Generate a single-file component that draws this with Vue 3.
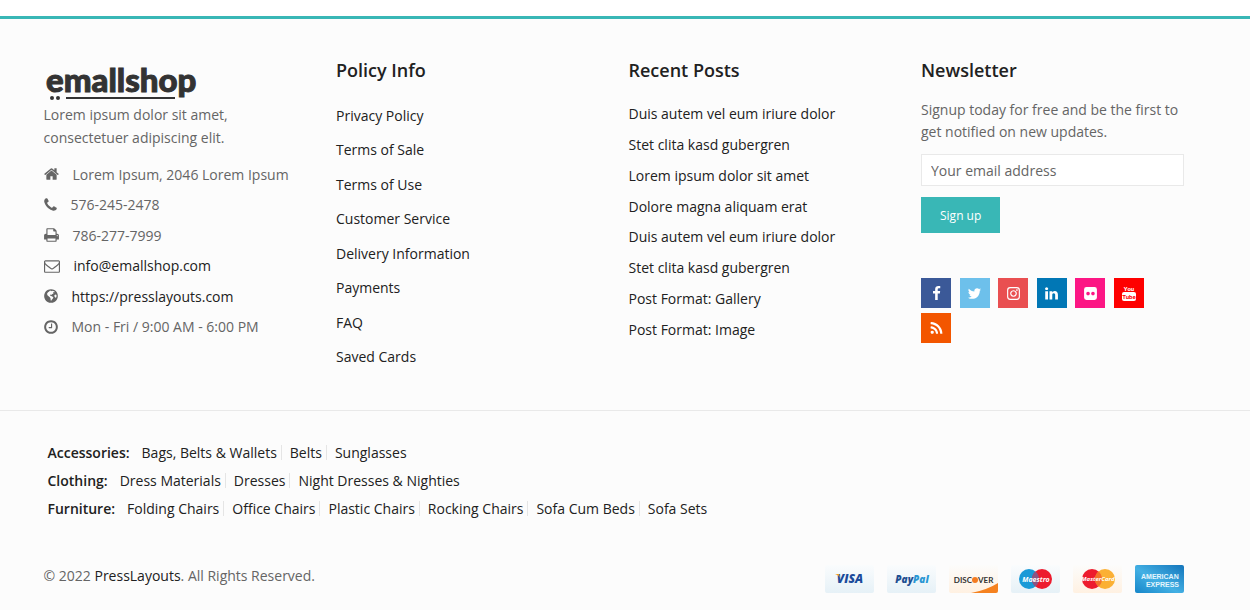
<script setup>
import { ref } from 'vue'

const email = ref('')

const contacts = [
  { text: 'Lorem Ipsum, 2046 Lorem Ipsum', w: 15, box: '64 0 1664 1792', d: 'M1472 992v480q0 26-19 45t-45 19h-384v-384h-256v384h-384q-26 0-45-19t-19-45v-480q0-1 .5-3t.5-3l575-474 575 474q1 2 1 6zm223-69l-62 74q-8 9-21 11h-3q-13 0-21-7l-692-577-692 577q-12 8-24 7-13-2-21-11l-62-74q-8-10-7-23.5t11-21.5l719-599q32-26 76-26t76 26l244 204v-195q0-14 9-23t23-9h192q14 0 23 9t9 23v408l219 182q10 8 11 21.5t-7 23.5z' },
  { text: '576-245-2478', w: 13, box: '192 0 1408 1792', d: 'M1600 1240q0 27-10 70.5t-21 68.5q-21 50-122 106-94 51-186 51-27 0-52.5-3.5t-57.5-12.5-47.5-14.5-55.5-20.5-49-18q-98-35-175-83-128-79-264.5-215.5t-215.5-264.5q-48-77-83-175-3-9-18-49t-20.5-55.5-14.5-47.5-12.5-57.5-3.5-52.5q0-92 51-186 56-101 106-122 25-11 68.5-21t70.5-10q14 0 21 3 18 6 53 76 11 19 30 54t35 63.5 31 53.5q3 4 17.5 25t21.5 35.5 7 28.5q0 20-28.5 50t-62 55-62 53-28.5 46q0 9 5 22.5t8.5 20.5 14 24 11.5 19q76 137 174 235t235 174q2 1 19 11.5t24 14 20.5 8.5 22.5 5q18 0 46-28.5t53-62 55-62 50-28.5q14 0 28.5 7t35.5 21.5 25 17.5q25 15 53.5 31t63.5 35 54 30q70 35 76 53 3 7 3 21z' },
  { text: '786-277-7999', w: 15, box: '64 0 1664 1792', d: 'M448 1536h896v-256h-896v256zm0-640h896v-384h-160q-40 0-68-28t-28-68v-160h-640v640zm1152 64q0-26-19-45t-45-19-45 19-19 45 19 45 45 19 45-19 19-45zm128 0v416q0 13-9.5 22.5t-22.5 9.5h-224v160q0 40-28 68t-68 28h-960q-40 0-68-28t-28-68v-160h-224q-13 0-22.5-9.5t-9.5-22.5v-416q0-79 56.5-135.5t135.5-56.5h64v-544q0-40 28-68t68-28h672q40 0 88 20t76 48l152 152q28 28 48 76t20 88v256h64q79 0 135.5 56.5t56.5 135.5z' },
  { text: 'info@emallshop.com', href: 'mailto:info@emallshop.com', w: 16, box: '0 0 1792 1792', d: 'M1664 1504v-768q-32 36-69 66-268 206-426 338-51 43-83 67t-86.5 48.5-102.5 24.5h-2q-48 0-102.5-24.5t-86.5-48.5-83-67q-158-132-426-338-37-30-69-66v768q0 13 9.5 22.5t22.5 9.5h1472q13 0 22.5-9.5t9.5-22.5zm0-1051v-24.5l-.5-13-3-12.5-5.5-9-9-7.5-14-2.5h-1472q-13 0-22.5 9.5t-9.5 22.5q0 168 147 284 193 152 401 317 6 5 35 29.5t46 37.5 44.5 31.5 50.5 27.5 43 9h2q20 0 43-9t50.5-27.5 44.5-31.5 46-37.5 35-29.5q208-165 401-317 54-43 100.5-115.5t46.5-131.5zm128-37v1088q0 66-47 113t-113 47h-1472q-66 0-113-47t-47-113v-1088q0-66 47-113t113-47h1472q66 0 113 47t47 113z' },
  { text: 'https://presslayouts.com', href: 'https://presslayouts.com', w: 14, box: '128 0 1536 1792', d: 'M896 128a768 768 0 1 0 .1 0zM1010 300L1240 350 1330 440 1260 470 1180 440 1120 500 1200 560 1120 640 1010 700 960 790 900 740 800 760 790 850 890 900 990 920 1120 1000 1160 1080 1060 1220 960 1330 930 1440 880 1430 850 1280 830 1130 730 1010 630 930 500 800 450 640 560 480 700 400 720 330 860 290 900 360zM1330 760L1460 720 1520 850 1500 1010 1420 1120 1350 1010 1280 940 1270 830z' },
  { text: 'Mon - Fri / 9:00 AM - 6:00 PM', w: 14, box: '128 0 1536 1792', d: 'M1024 544v448q0 14-9 23t-23 9h-320q-14 0-23-9t-9-23v-64q0-14 9-23t23-9h224v-352q0-14 9-23t23-9h64q14 0 23 9t9 23zm416 352q0-148-73-273t-198-198-273-73-273 73-198 198-73 273 73 273 198 198 273 73 273-73 198-198 73-273zm224 0q0 209-103 385.5t-279.5 279.5-385.5 103-385.5-103-279.5-279.5-103-385.5 103-385.5 279.5-279.5 385.5-103 385.5 103 279.5 279.5 103 385.5z' },
]

const policies = ['Privacy Policy', 'Terms of Sale', 'Terms of Use', 'Customer Service', 'Delivery Information', 'Payments', 'FAQ', 'Saved Cards']

const posts = [
  'Duis autem vel eum iriure dolor',
  'Stet clita kasd gubergren',
  'Lorem ipsum dolor sit amet',
  'Dolore magna aliquam erat',
  'Duis autem vel eum iriure dolor',
  'Stet clita kasd gubergren',
  'Post Format: Gallery',
  'Post Format: Image',
]

const socials = [
  { name: 'facebook', label: 'Facebook', d: 'M1343 12v264h-157q-86 0-116 36t-30 108v189h293l-39 296h-254v759h-306v-759h-255v-296h255v-218q0-186 104-288.5t277-102.5q147 0 228 12z' },
  { name: 'twitter', label: 'Twitter', d: 'M1684 408q-67 98-162 167 1 14 1 42 0 130-38 259.5t-115.5 248.5-184.5 210.5-258 146-323 54.5q-271 0-496-145 35 4 78 4 225 0 401-138-105-2-188-64.5t-114-159.5q33 5 61 5 43 0 85-11-112-23-185.5-111.5t-73.5-205.5v-4q68 38 146 41-66-44-105-115t-39-154q0-88 44-163 121 149 294.5 238.5t371.5 99.5q-8-38-8-74 0-134 94.5-228.5t228.5-94.5q140 0 236 102 109-21 205-78-37 115-142 178 93-10 186-50z' },
  { name: 'instagram', label: 'Instagram', d: 'M500 128h792q372 0 372 372v792q0 372-372 372h-792q-372 0-372-372v-792q0-372 372-372zm20 138q-254 0-254 254v752q0 254 254 254h752q254 0 254-254v-752q0-254-254-254zM896 502a394 394 0 1 1-.1 0zm0 138a256 256 0 1 0 .1 0zM1306 394a92 92 0 1 1-.1 0z' },
  { name: 'linkedin', label: 'LinkedIn', d: 'M477 625v991h-330v-991h330zm21-306q1 73-50.5 122t-135.5 49h-2q-82 0-132-49t-50-122q0-74 51.5-122.5t134.5-48.5 133 48.5 51 122.5zm1166 729v568h-329v-530q0-105-40.5-164.5t-126.5-59.5q-63 0-105.5 34.5t-63.5 85.5q-11 30-11 81v553h-329q2-399 2-647t-1-296l-1-48h329v144h-2q20-32 41-56t56.5-52 87-43.5 114.5-15.5q171 0 275 113.5t104 332.5z' },
  { name: 'flickr', label: 'Flickr', d: 'M416 128h960q288 0 288 288v960q0 288-288 288h-960q-288 0-288-288v-960q0-288 288-288zM603 685a211 211 0 1 0 .1 0zM1189 685a211 211 0 1 0 .1 0z' },
  { name: 'youtube', label: 'YouTube' },
  { name: 'rss', label: 'RSS', d: 'M576 1344q0 80-56 136t-136 56-136-56-56-136 56-136 136-56 136 56 56 136zm512 123q2 28-17 48-18 21-47 21h-135q-25 0-43-16.5t-20-41.5q-22-229-184.5-391.5t-391.5-184.5q-25-2-41.5-20t-16.5-43v-135q0-29 21-47 17-17 43-17h5q160 13 306 80.5t259 181.5q114 113 181.5 259t80.5 306zm512 2q2 27-18 47-18 20-46 20h-143q-26 0-44.5-17.5t-19.5-42.5q-12-215-101-408.5t-231.5-336-336-231.5-408.5-102q-25-1-42.5-19.5t-17.5-43.5v-143q0-28 20-46 18-18 44-18h3q262 13 501.5 120t425.5 294q187 186 294 425.5t120 501.5z' },
]

const categories = [
  { name: 'Accessories:', items: ['Bags, Belts & Wallets', 'Belts', 'Sunglasses'] },
  { name: 'Clothing:', items: ['Dress Materials', 'Dresses', 'Night Dresses & Nighties'] },
  { name: 'Furniture:', items: ['Folding Chairs', 'Office Chairs', 'Plastic Chairs', 'Rocking Chairs', 'Sofa Cum Beds', 'Sofa Sets'] },
]
</script>

<template>
  <div class="page">
    <footer class="footer">
      <div class="upper">
        <div class="container columns">
          <section class="column">
            <svg class="logo" width="160" height="45" viewBox="0 0 160 45" role="img" aria-label="emallshop">
              <text x="2" y="34" class="wordmark">emallshop</text>
              <circle cx="8" cy="40" r="2" />
              <circle cx="14" cy="40" r="2" />
              <rect x="22" y="39" width="109" height="2" />
            </svg>
            <p class="about">Lorem ipsum dolor sit amet, consectetuer adipiscing elit.</p>
            <ul class="contacts">
              <li v-for="c in contacts" :key="c.text">
                <svg class="contact-icon" :width="c.w" height="16" :viewBox="c.box" aria-hidden="true">
                  <path :d="c.d" fill-rule="evenodd" />
                </svg>
                <a v-if="c.href" :href="c.href">{{ c.text }}</a>
                <span v-else>{{ c.text }}</span>
              </li>
            </ul>
          </section>

          <section class="column">
            <h2>Policy Info</h2>
            <ul class="links policy">
              <li v-for="p in policies" :key="p"><a href="#">{{ p }}</a></li>
            </ul>
          </section>

          <section class="column">
            <h2>Recent Posts</h2>
            <ul class="links posts">
              <li v-for="(p, i) in posts" :key="i"><a href="#">{{ p }}</a></li>
            </ul>
          </section>

          <section class="column">
            <h2>Newsletter</h2>
            <form class="newsletter" @submit.prevent>
              <label for="email">Signup today for free and be the first to get notified on new updates.</label>
              <input id="email" v-model="email" type="email" placeholder="Your email address" />
              <button type="submit">Sign up</button>
            </form>
            <div class="socials">
              <a v-for="s in socials" :key="s.name" href="#" :class="s.name" :aria-label="s.label">
                <svg v-if="s.d" width="15" height="15" viewBox="0 0 1792 1792" aria-hidden="true">
                  <path :d="s.d" fill-rule="evenodd" />
                </svg>
                <svg v-else width="16" height="16" viewBox="0 0 16 16" aria-hidden="true">
                  <text x="8" y="6" class="tube-text">You</text>
                  <rect x="1" y="7" width="14" height="9" rx="2" />
                  <text x="8" y="14" class="tube-text tube-red">Tube</text>
                </svg>
              </a>
            </div>
          </section>
        </div>
      </div>

      <div class="lower">
        <div class="container inset">
          <div class="categories">
            <div v-for="c in categories" :key="c.name" class="category">
              <strong>{{ c.name }}</strong>
              <a v-for="i in c.items" :key="i" href="#">{{ i }}</a>
            </div>
          </div>
          <div class="bottom">
            <p>© 2022 <a href="#">PressLayouts</a>. All Rights Reserved.</p>
            <div class="cards">
              <svg class="card" width="49" height="28" viewBox="0 0 49 28" role="img" aria-label="Visa">
                <defs>
                  <linearGradient id="pale" x1="0" y1="0" x2="0" y2="1"><stop offset="0" stop-color="#fafcfd" /><stop offset="1" stop-color="#e6f1f7" /></linearGradient>
                  <linearGradient id="cream" x1="0" y1="0" x2="0" y2="1"><stop offset="0" stop-color="#fcfcfb" /><stop offset="1" stop-color="#fff1e2" /></linearGradient>
                  <linearGradient id="blue" x1="0" y1="1" x2="1" y2="0"><stop offset="0" stop-color="#1686c9" /><stop offset=".45" stop-color="#43b0e4" /><stop offset="1" stop-color="#1475bb" /></linearGradient>
                </defs>
                <rect width="49" height="28" rx="2" fill="url(#pale)" />
                <text x="25" y="18" class="visa">VISA</text>
                <path d="M10 9h4l1 4q-1-3-5-4z" fill="#f6a01a" />
              </svg>
              <svg class="card" width="49" height="28" viewBox="0 0 49 28" role="img" aria-label="PayPal">
                <rect width="49" height="28" rx="2" fill="url(#pale)" />
                <text x="25" y="18" class="paypal">Pay<tspan fill="#2997d4">Pal</tspan></text>
              </svg>
              <svg class="card" width="49" height="28" viewBox="0 0 49 28" role="img" aria-label="Discover">
                <rect width="49" height="28" rx="2" fill="url(#cream)" />
                <path d="M22 28Q38 25 49 18v8q0 2-2 2z" fill="#f58220" />
                <text x="23" y="18" class="discover end">DISC</text>
                <circle cx="26" cy="15" r="3" fill="#f47b20" />
                <text x="29" y="18" class="discover">VER</text>
              </svg>
              <svg class="card" width="49" height="28" viewBox="0 0 49 28" role="img" aria-label="Maestro">
                <rect width="49" height="28" rx="2" fill="url(#pale)" />
                <circle cx="18" cy="14" r="10" fill="#1a9ad7" />
                <circle cx="31" cy="14" r="10" fill="#ed1b2e" />
                <path d="M24.500 6.400a10 10 0 0 1 0 15.200 10 10 0 0 1 0-15.200z" fill="#8b5584" />
                <text x="25" y="17" class="circles">Maestro</text>
              </svg>
              <svg class="card" width="49" height="28" viewBox="0 0 49 28" role="img" aria-label="MasterCard">
                <rect width="49" height="28" rx="2" fill="url(#cream)" />
                <circle cx="19" cy="14" r="10" fill="#ed1b2e" />
                <circle cx="32" cy="14" r="10" fill="#fbb034" />
                <path d="M25.500 6.400a10 10 0 0 1 0 15.200 10 10 0 0 1 0-15.200z" fill="#f3722b" />
                <text x="25" y="16" class="circles small">MasterCard</text>
              </svg>
              <svg class="card" width="49" height="28" viewBox="0 0 49 28" role="img" aria-label="American Express">
                <rect width="49" height="28" rx="2" fill="url(#blue)" />
                <text x="6" y="14" class="amex">AMERICAN</text>
                <text x="44" y="22" class="amex end">EXPRESS</text>
              </svg>
            </div>
          </div>
        </div>
      </div>
    </footer>
  </div>
</template>

<style>
body {
  margin: 0;
  background: #fff;
}
</style>

<style scoped>
.page {
  box-sizing: border-box;
  min-height: 100vh;
  padding-top: 16px;
  display: flex;
  flex-direction: column;
  font-family: "Open Sans", "Noto Sans", sans-serif;
  font-size: 14px;
  color: #656565;
}
.footer {
  flex: 1;
  border-top: 3px solid #39b7b6;
  background: #fcfcfc;
}
a {
  color: #212121;
  text-decoration: none;
}
ul {
  list-style: none;
  margin: 0;
  padding: 0;
}
p {
  margin: 0;
}
.upper {
  padding: 39px 23px 36px 0;
  border-bottom: 1px solid #e9e9e9;
}
.container {
  max-width: 1170px;
  margin: 0 auto;
}
.columns {
  display: grid;
  grid-template-columns: repeat(4, 1fr);
}
.column {
  padding: 0 15px;
}
h2 {
  margin: 0 0 16px;
  font-size: 18px;
  line-height: 24px;
  font-weight: 600;
  color: #212121;
}
.logo {
  display: block;
  fill: #333;
}
.wordmark {
  font: 900 33px Lato, "Open Sans", sans-serif;
  stroke: #333;
  stroke-width: 1;
}
.about {
  max-width: 220px;
  line-height: 23px;
}
.contacts {
  margin-top: 10px;
  min-height: 183px;
  display: grid;
  grid-auto-rows: 1fr;
}
.contacts li {
  display: flex;
  align-items: center;
  white-space: nowrap;
}
.contact-icon {
  margin-right: 14px;
  flex: none;
  fill: #656565;
}
.links {
  display: grid;
  grid-auto-rows: 1fr;
  align-items: center;
}
.policy {
  min-height: 276px;
}
.posts {
  min-height: 247px;
}
.newsletter {
  padding-top: 1px;
  display: flex;
  flex-direction: column;
  align-items: flex-start;
}
.newsletter label {
  line-height: 22px;
}
.newsletter input {
  box-sizing: border-box;
  width: 100%;
  height: 32px;
  margin: 11px 0;
  padding: 0 9px;
  border: 1px solid #e9e9e9;
  border-radius: 0;
  background: #fff;
  font: inherit;
  color: #656565;
}
.newsletter input::placeholder {
  color: #656565;
  opacity: 1;
}
.newsletter button {
  height: 36px;
  padding: 0 19px;
  border: 0;
  background: #39b7b6;
  color: #fff;
  font: 12px "Open Sans", sans-serif;
}
.socials {
  max-width: 223px;
  margin-top: 45px;
  display: grid;
  grid-template-columns: repeat(6, 30px);
  justify-content: space-between;
  row-gap: 5px;
}
.socials a {
  height: 30px;
  display: flex;
  align-items: center;
  justify-content: center;
}
.socials svg {
  fill: #fff;
}
.facebook { background: #3b5998; }
.twitter { background: #6dc0eb; }
.instagram { background: #e94f51; }
.linkedin { background: #0177b5; }
.flickr { background: #fc1684; }
.youtube { background: #fe0000; }
.rss { background: #f35600; }
.tube-text {
  font: bold 6px Roboto, sans-serif;
  text-anchor: middle;
}
.tube-red {
  fill: #fe0000;
}
.lower {
  padding: 27px 23px 17px 0;
}
.inset {
  box-sizing: border-box;
  padding: 0 15px;
}
.categories {
  padding-left: 4px;
}
.category {
  min-height: 28px;
  display: flex;
  flex-wrap: wrap;
  align-items: center;
}
.category strong {
  margin-right: 12px;
  font-weight: 600;
  color: #212121;
}
.category a {
  margin-right: 8px;
  padding-right: 4px;
  border-right: 1px solid #e5e5e5;
  line-height: 15px;
}
.category a:last-child {
  border-right: 0;
}
.bottom {
  margin-top: 43px;
  display: flex;
  justify-content: space-between;
  align-items: flex-start;
}
.bottom p {
  line-height: 22px;
}
.cards {
  display: flex;
  gap: 13px;
}
.card {
  display: block;
}
.visa {
  font: italic 800 12px "Open Sans", sans-serif;
  fill: #1b4b9b;
  text-anchor: middle;
}
.paypal {
  font: italic 800 10px "Open Sans", sans-serif;
  fill: #1e4f91;
  text-anchor: middle;
}
.discover {
  font: bold 8px Lato, sans-serif;
  fill: #333;
}
.end {
  text-anchor: end;
}
.circles {
  font: italic bold 7px "Open Sans", sans-serif;
  fill: #fff;
  text-anchor: middle;
}
.small {
  font-size: 6px;
}
.amex {
  font: bold 7px "Liberation Sans", sans-serif;
  fill: #e4f5fd;
}
</style>
